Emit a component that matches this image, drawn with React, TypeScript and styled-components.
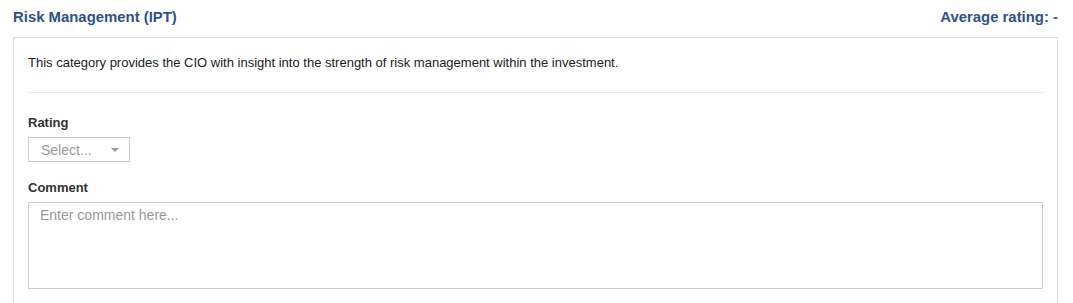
import React from "react";
import styled, { createGlobalStyle } from "styled-components";

const Global = createGlobalStyle`
  html, body { margin: 0; padding: 0; background: #fff; }
  body { font-family: "Liberation Sans", Arial, sans-serif; color: #333; }
`;

const Page = styled.div`
  padding: 0 15px 0 13px;
`;

const Header = styled.div`
  display: flex;
  justify-content: space-between;
  align-items: center;
  height: 37px;
  padding-bottom: 3px;
  box-sizing: border-box;
`;

const Title = styled.h2`
  margin: 0;
  font-size: 14.9px;
  font-weight: bold;
  color: #2d5289;
`;

const Panel = styled.div`
  border: 1px solid #ddd;
  border-bottom: none;
  padding: 15px 14px 40px 14px;
  min-height: 270px;
  box-sizing: border-box;
`;

const Description = styled.p`
  margin: 0;
  font-size: 13px;
  line-height: 20px;
  color: #222;
  padding-bottom: 19px;
  border-bottom: 1px solid #e8e8e8;
`;

const Field = styled.div<{ $top: number }>`
  display: flex;
  flex-direction: column;
  margin-top: ${(p) => p.$top}px;
`;

const Label = styled.label`
  font-size: 13px;
  font-weight: bold;
  color: #333;
  line-height: 16px;
  margin-bottom: 6px;
`;

const SelectBox = styled.div`
  width: 102px;
  height: 25px;
  box-sizing: border-box;
  border: 1px solid #ccc;
  display: flex;
  align-items: center;
  justify-content: space-between;
  padding: 0 10px 0 12px;
  font-size: 14px;
  color: #999;
`;

const Caret = styled.span`
  width: 0;
  height: 0;
  border-left: 4px solid transparent;
  border-right: 4px solid transparent;
  border-top: 4px solid #999;
`;

const TextArea = styled.textarea`
  height: 87px;
  box-sizing: border-box;
  border: 1px solid #ccc;
  padding: 4px 11px;
  font-family: "Liberation Sans", Arial, sans-serif;
  font-size: 14px;
  resize: none;
  outline: none;
  &::placeholder { color: #999; }
`;

export default function App() {
  return (
    <Page>
      <Global />
      <Header>
        <Title>Risk Management (IPT)</Title>
        <Title>Average rating: -</Title>
      </Header>
      <Panel>
        <Description>
          This category provides the CIO with insight into the strength of risk management within the investment.
        </Description>
        <Field $top={22}>
          <Label>Rating</Label>
          <SelectBox>
            <span>Select...</span>
            <Caret />
          </SelectBox>
        </Field>
        <Field $top={18}>
          <Label>Comment</Label>
          <TextArea placeholder="Enter comment here..." />
        </Field>
      </Panel>
    </Page>
  );
}
